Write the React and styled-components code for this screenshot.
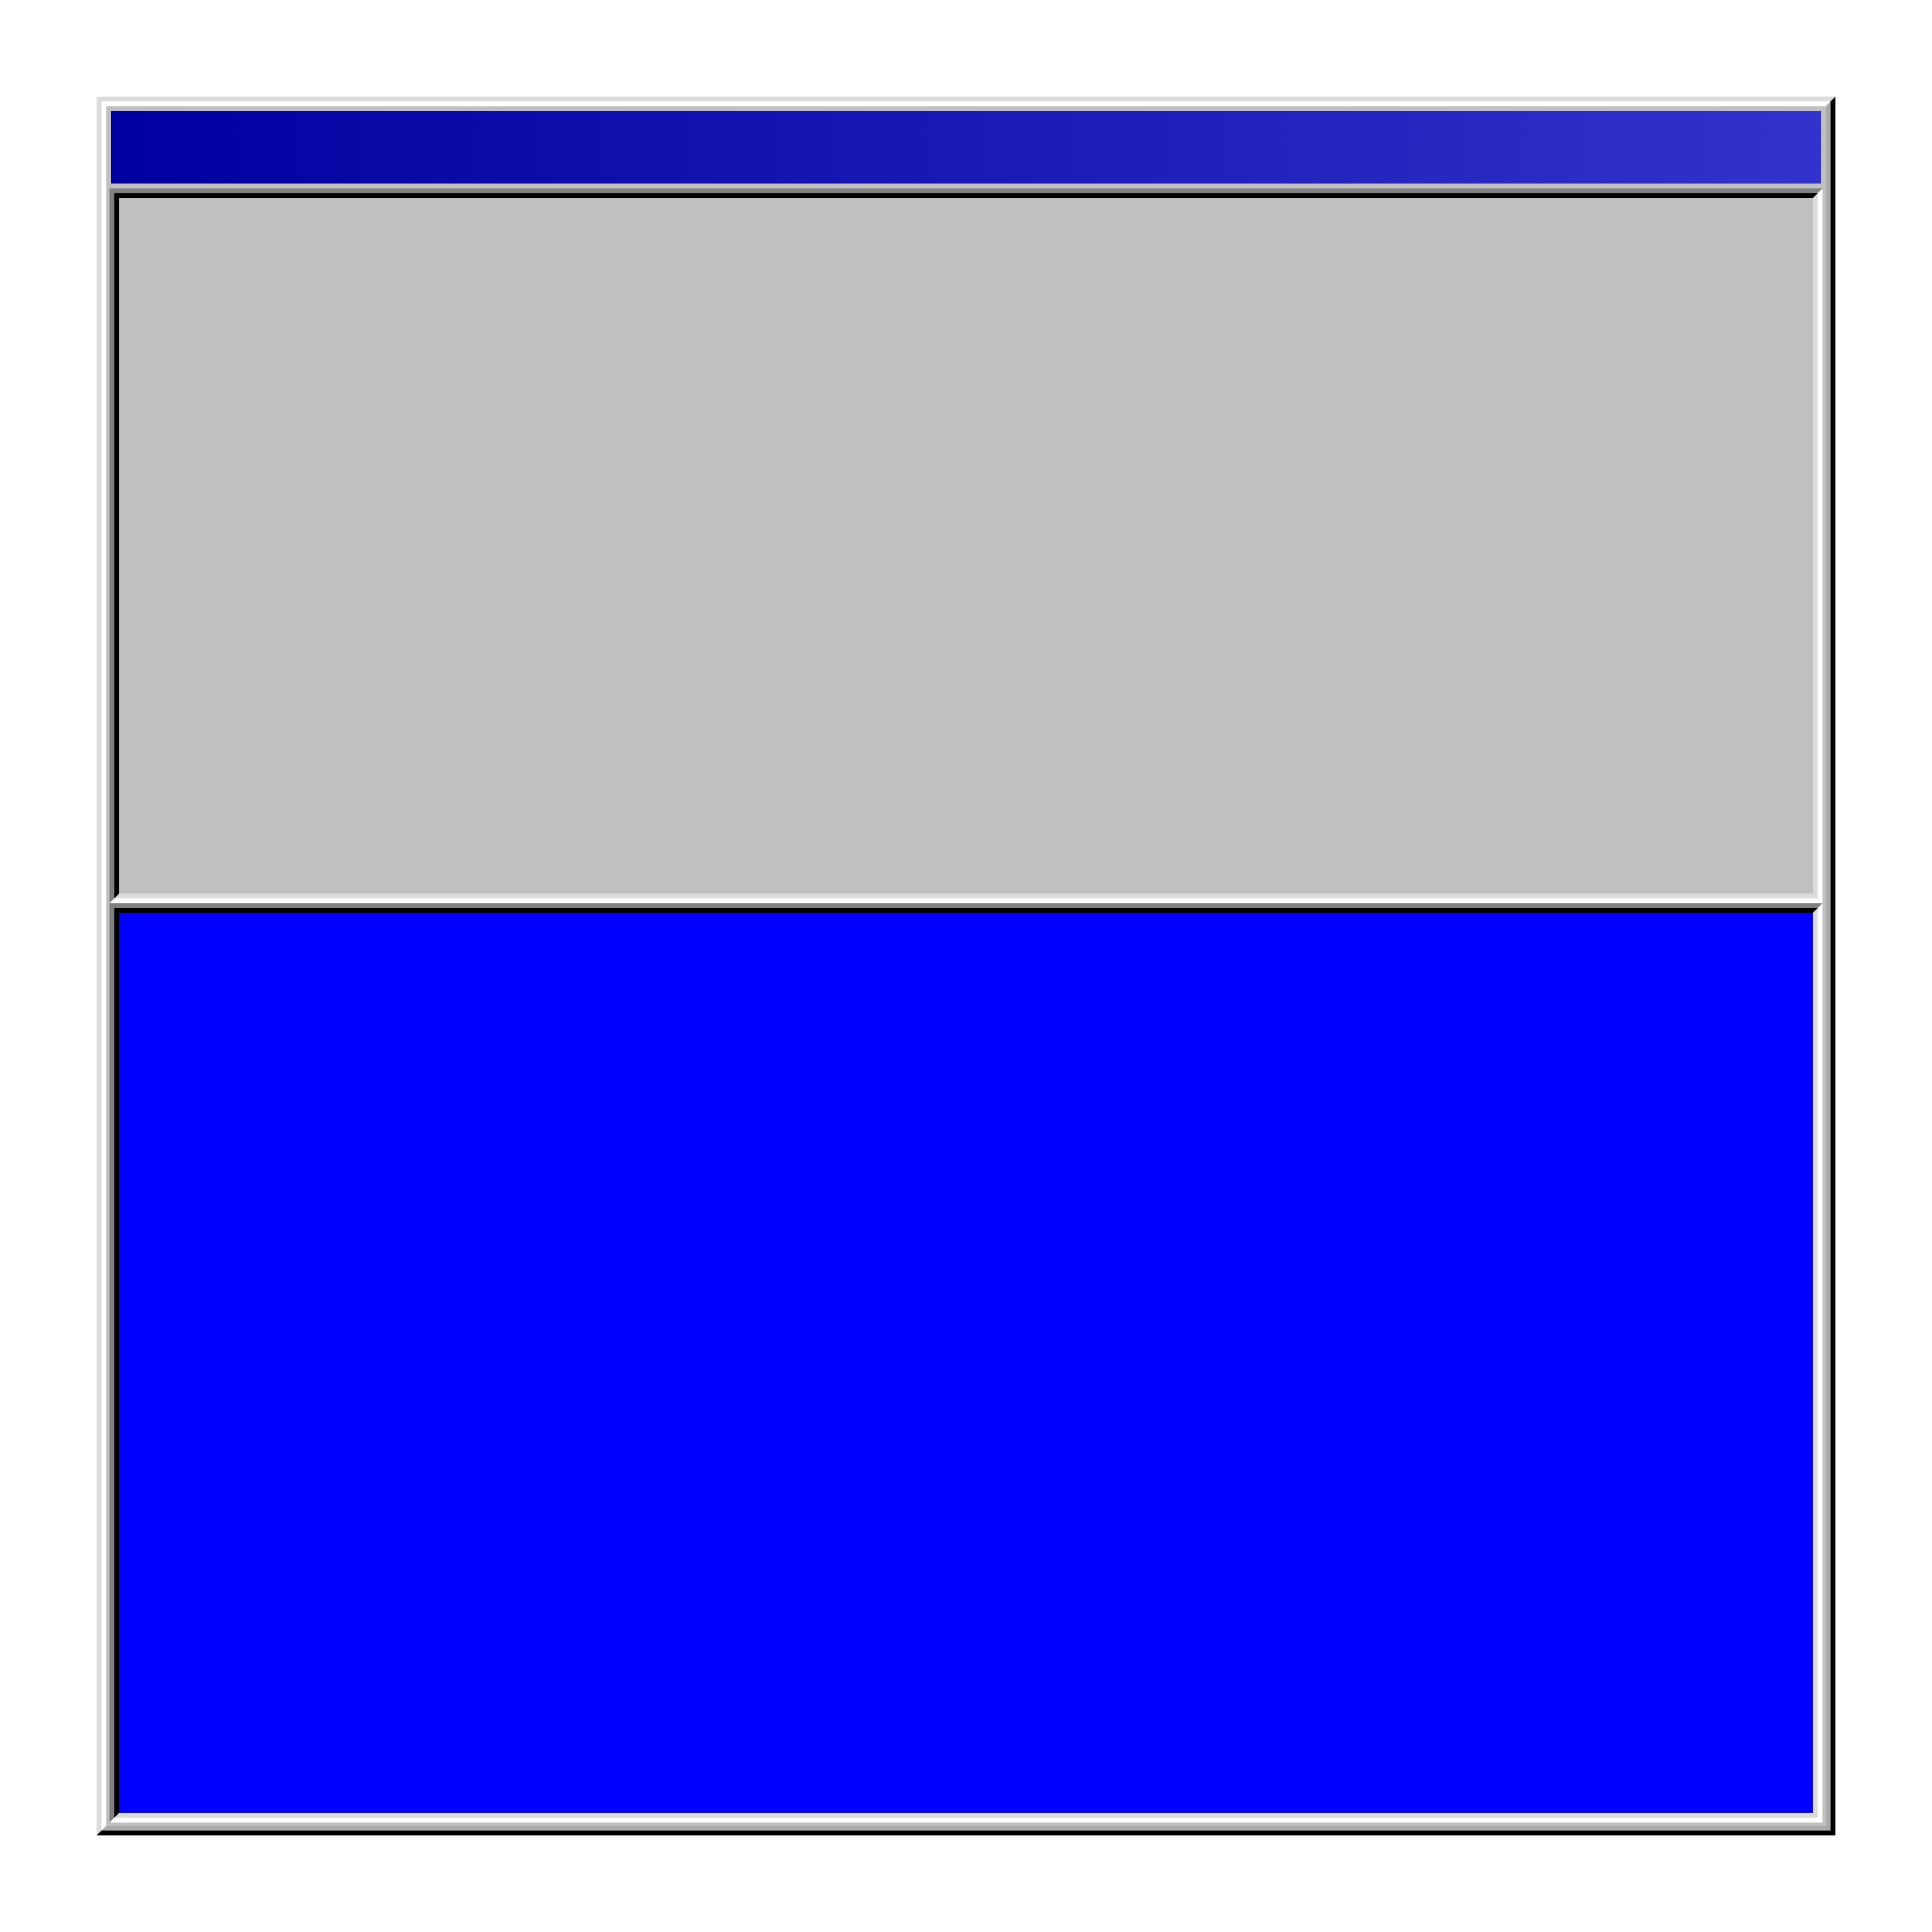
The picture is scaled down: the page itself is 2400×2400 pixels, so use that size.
import React from 'react';
import styled, { createGlobalStyle } from 'styled-components';

const GlobalStyle = createGlobalStyle`
  html, body {
    margin: 0;
    padding: 0;
    background: #ffffff;
    font-family: "Liberation Sans", Arial, sans-serif;
  }
`;

const Page = styled.div`
  padding: 120px;
`;

const Window = styled.div`
  box-sizing: border-box;
  width: 2160px;
  height: 2160px;
  display: flex;
  border: 6px solid;
  border-color: #dcdcdc #000000 #000000 #dcdcdc;
`;

const WindowBody = styled.div`
  flex: 1;
  display: flex;
  flex-direction: column;
  border: 6px solid;
  border-color: #ffffff #aaaaaa #aaaaaa #ffffff;
  background: #c0c0c0;
  padding: 6px 0 4px;
`;

const TitleBar = styled.div`
  height: 90px;
  margin: 0 6px 6px;
  background: linear-gradient(to right, #0000a0, #3232cc);
`;

const Panel = styled.div`
  display: flex;
  margin: 0 4px;
  border: 6px solid;
  border-color: #808080 #ffffff #ffffff #808080;
  ${(p) => (p.$grow ? 'flex: 1;' : `height: ${p.$height}px;`)}
`;

const PanelFace = styled.div`
  flex: 1;
  border: 6px solid;
  border-color: #000000 #dcdcdc #dcdcdc #000000;
  background: ${(p) => p.$color};
`;

export default function App() {
  return (
    <>
      <GlobalStyle />
      <Page>
        <Window>
          <WindowBody>
            <TitleBar />
            <Panel $height={876}>
              <PanelFace $color="#c0c0c0" />
            </Panel>
            <Panel $grow>
              <PanelFace $color="#0000ff" />
            </Panel>
          </WindowBody>
        </Window>
      </Page>
    </>
  );
}
